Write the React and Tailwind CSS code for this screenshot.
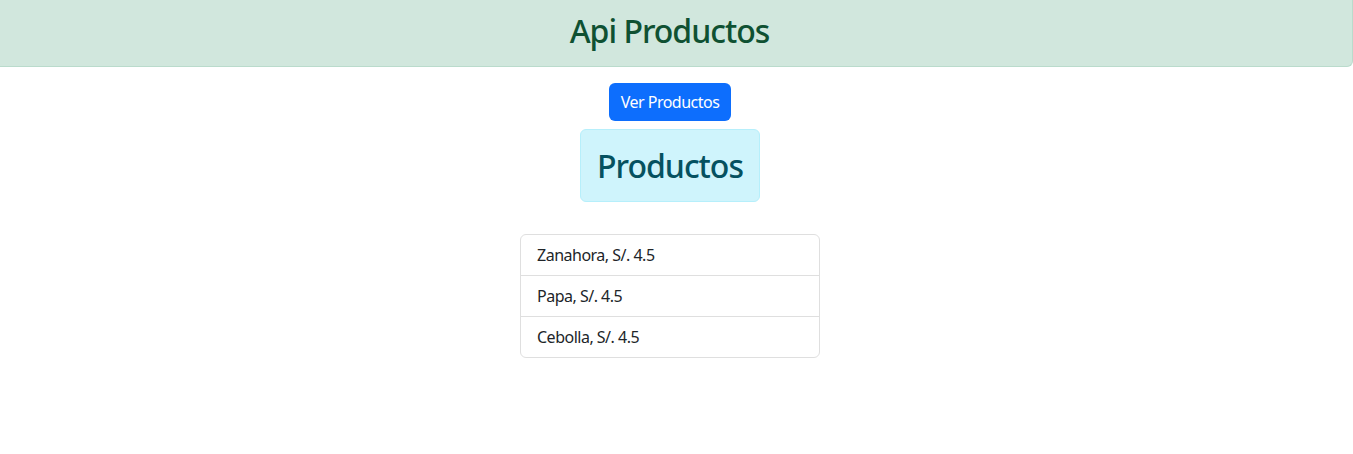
export default function App() {
  const items = ["Zanahora, S/. 4.5", "Papa, S/. 4.5", "Cebolla, S/. 4.5"];
  return (
    <div className="min-h-[454px] bg-white text-[#212529]" style={{ fontFamily: '"Noto Sans", "Open Sans", sans-serif' }}>
      <div className="h-[67px] bg-[#d1e7dd] border-r border-b border-[#badbcc] rounded-br-md flex items-center justify-center pr-[13px] pb-[4px]">
        <h2 className="text-[32px] leading-[38px] font-medium tracking-[-1px] text-[#0f5132]">Api Productos</h2>
      </div>
      <div className="w-[1340px] flex flex-col items-center">
        <button className="mt-4 h-[38px] px-3 rounded-md bg-[#0d6efd] text-white text-base leading-6 tracking-[-0.5px]">Ver Productos</button>
        <div className="mt-2 h-[73px] px-4 flex items-center bg-[#cff4fc] border border-[#b6effb] rounded-md">
          <h2 className="text-[32px] leading-[38px] font-medium tracking-[-1px] text-[#055160]">Productos</h2>
        </div>
        <ul className="mt-8 w-[300px] border border-[#dfdfdf] rounded-md">
          {items.map((it, i) => (
            <li key={i} className={"px-4 py-2 text-base leading-6 tracking-[-0.5px] " + (i > 0 ? "border-t border-[#dfdfdf]" : "")}>{it}</li>
          ))}
        </ul>
      </div>
    </div>
  );
}
